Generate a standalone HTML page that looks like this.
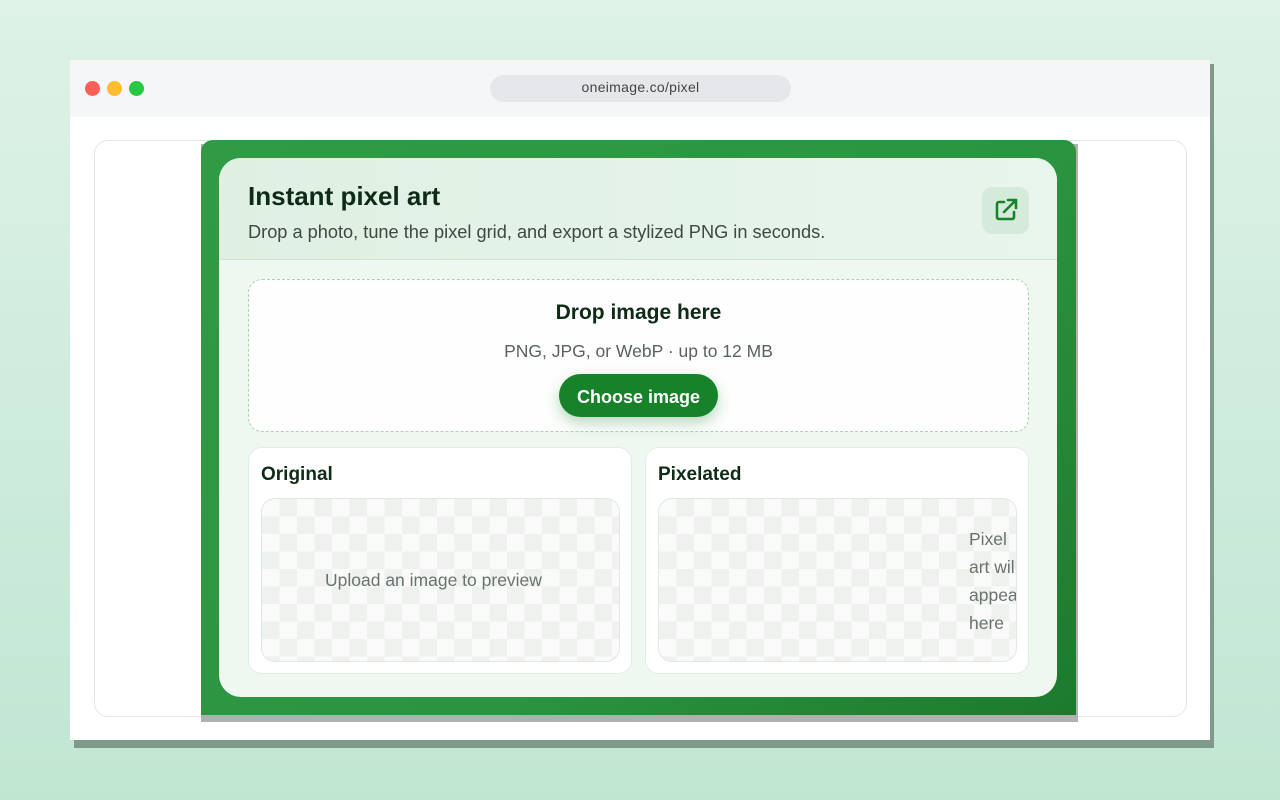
<!DOCTYPE html>
<html><head><style>
*{box-sizing:border-box;margin:0;padding:0}
body{width:1280px;height:800px;overflow:hidden;background:linear-gradient(180deg,#def2e6,#c0e6d2);font-family:"Liberation Sans",sans-serif;position:relative}
.shadow{position:absolute;left:74px;top:64px;width:1140px;height:684px;background:#7f9a8a}
.win{position:absolute;left:70px;top:60px;width:1140px;height:680px;background:#fff}
.bar{height:57px;background:#f5f6f8;position:relative}
.dot{position:absolute;top:21px;width:15px;height:15px;border-radius:50%}
.url{position:absolute;left:420px;top:15px;width:301px;height:27px;border-radius:14px;background:#e5e7ea;text-align:center;line-height:25px;font-size:14px;color:#444;letter-spacing:.3px}
.frame{position:absolute;left:24px;top:80px;width:1093px;height:577px;border:1.5px solid #e3e5e8;border-radius:14px}
.gshadow{position:absolute;left:131px;top:84px;width:877px;height:578px;background:#b0b0b0}
.green{position:absolute;left:131px;top:80px;width:875px;height:575px;background:linear-gradient(135deg,#319a45,#2a9440 60%,#1c7a2c);border-radius:12px 12px 0 0}
.card{position:absolute;left:18px;top:18px;width:838px;height:539px;border-radius:22px;background:#eef7f0;overflow:hidden}
.head{height:102px;background:linear-gradient(90deg,#dff0e3,#e8f5eb);border-bottom:1.5px solid #cfe5d4;position:relative}
h1{position:absolute;left:29px;top:23px;font-size:26px;color:#0f2a16;font-weight:bold}
.sub{position:absolute;left:29px;top:64px;font-size:18.2px;color:#3d4a42}
.ext{position:absolute;left:763px;top:29px;width:47px;height:47px;border-radius:10px;background:#d5eadb}
.drop{position:absolute;left:29px;top:121px;width:781px;height:153px;border:1.5px dashed #a6d3b0;border-radius:14px;background:#fdfefd;text-align:center}
.drop b{display:block;margin-top:21px;font-size:21px;color:#0f2a16}
.drop p{margin-top:16px;font-size:17.5px;color:#5a635d}
.btn{display:inline-block;margin-top:12px;width:159px;height:43px;border-radius:22px;background:#17822a;color:#fff;font-weight:bold;font-size:18px;line-height:46px;box-shadow:0 6px 14px rgba(23,130,42,.3)}
.pc{position:absolute;top:289px;width:384px;height:227px;background:#fff;border:1.5px solid #e0eee3;border-radius:14px}
.pc h3{position:absolute;left:12px;top:16px;font-size:19px;color:#0f2a16;font-weight:bold}
.pv{position:absolute;left:12px;top:50px;width:359px;height:164px;border:1.5px solid #dfe9e1;border-radius:14px;overflow:hidden;
background-color:#f9faf9;background-image:linear-gradient(45deg,#eef1ee 25%,transparent 25%,transparent 75%,#eef1ee 75%),linear-gradient(45deg,#eef1ee 25%,transparent 25%,transparent 75%,#eef1ee 75%);background-size:35px 35px;background-position:0 0,17.5px 17.5px;color:#6a736d;font-size:17.5px}
</style></head><body>
<div class="shadow"></div>
<div class="win">
<div class="bar"><div class="dot" style="left:15px;background:#ff5f57"></div><div class="dot" style="left:37px;background:#febc2e"></div><div class="dot" style="left:59px;background:#28c840"></div><div class="url">oneimage.co/pixel</div></div>
<div class="frame"></div>
<div class="gshadow"></div>
<div class="green"><div class="card">
<div class="head"><h1>Instant pixel art</h1><div class="sub">Drop a photo, tune the pixel grid, and export a stylized PNG in seconds.</div>
<div class="ext"><svg width="47" height="47" viewBox="0 0 47 47" fill="none" stroke="#17822a" stroke-width="2.6" stroke-linecap="round" stroke-linejoin="round"><path d="M22 15h-5a2 2 0 0 0-2 2v13a2 2 0 0 0 2 2h13a2 2 0 0 0 2-2v-5"/><path d="M22 25l12-12M26 13h8v8"/></svg></div></div>
<div class="drop"><b>Drop image here</b><p>PNG, JPG, or WebP · up to 12 MB</p><span class="btn">Choose image</span></div>
<div class="pc" style="left:29px"><h3>Original</h3><div class="pv"><div style="position:absolute;left:63px;top:71px">Upload an image to preview</div></div></div>
<div class="pc" style="left:426px"><h3>Pixelated</h3><div class="pv"><div style="position:absolute;left:310px;top:26px;width:60px;line-height:28px;white-space:nowrap">Pixel<br>art will<br>appear<br>here</div></div></div>
</div></div>
</div>
</body></html>
